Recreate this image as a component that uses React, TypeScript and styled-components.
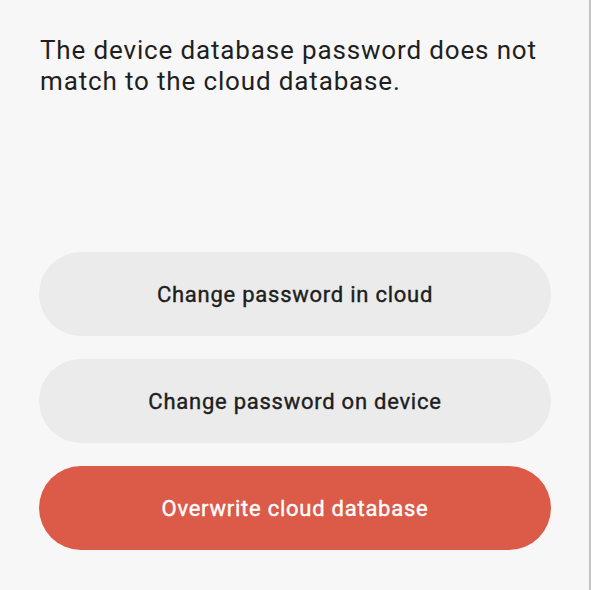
import React from "react";
import styled, { createGlobalStyle } from "styled-components";

const Global = createGlobalStyle`
  html, body { margin: 0; padding: 0; background: #f7f7f7; }
  body { font-family: Roboto, "Noto Sans", sans-serif; }
`;

const Screen = styled.div`
  box-sizing: border-box;
  width: 591px;
  height: 590px;
  background: #f7f7f7;
  border-right: 2px solid #c4c4c4;
  padding: 35px 39px 0 39px;
  display: flex;
  flex-direction: column;
`;

const Message = styled.p`
  margin: 0;
  font-size: 26px;
  line-height: 31px;
  letter-spacing: 0.85px;
  color: #1f1f1f;
  padding-left: 1px;
`;

const Actions = styled.div`
  margin-top: 155px;
  display: flex;
  flex-direction: column;
  gap: 23px;
`;

const ActionButton = styled.button<{ $danger?: boolean }>`
  height: 84px;
  width: 512px;
  border: none;
  border-radius: 42px;
  background: ${(p) => (p.$danger ? "#db5a48" : "#ebebeb")};
  color: ${(p) => (p.$danger ? "#ffffff" : "#1e1e1e")};
  -webkit-text-stroke: 0.4px ${(p) => (p.$danger ? "#ffffff" : "#1e1e1e")};
  font-family: Roboto, "Noto Sans", sans-serif;
  font-weight: 400;
  font-size: 22px;
  letter-spacing: 0.75px;
  cursor: pointer;
`;

export default function App() {
  return (
    <>
      <Global />
      <Screen>
        <Message>
          The device database password does not match to the cloud database.
        </Message>
        <Actions>
          <ActionButton>Change password in cloud</ActionButton>
          <ActionButton>Change password on device</ActionButton>
          <ActionButton $danger>Overwrite cloud database</ActionButton>
        </Actions>
      </Screen>
    </>
  );
}
